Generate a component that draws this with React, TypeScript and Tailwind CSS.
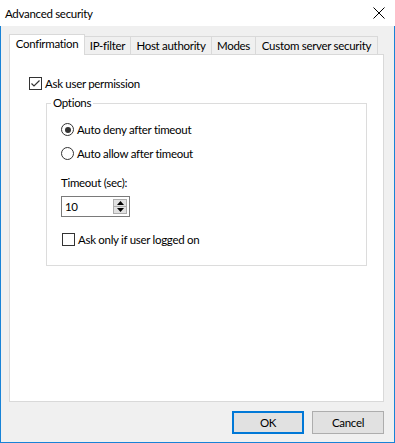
import React from "react";

const font = { fontFamily: "Lato, 'Liberation Sans', sans-serif" };

function CheckBox({ checked }: { checked?: boolean }) {
  return (
    <div className="w-[13px] h-[13px] border border-[#333333] bg-white flex items-center justify-center shrink-0">
      {checked && (
        <svg width="11" height="11" viewBox="0 0 11 11">
          <path d="M1.5 5.5 L4 8 L9.5 2.5" fill="none" stroke="#333333" strokeWidth="1.2" />
        </svg>
      )}
    </div>
  );
}

function Radio({ checked }: { checked?: boolean }) {
  return (
    <div className="w-[13px] h-[13px] rounded-full border border-[#333333] bg-white flex items-center justify-center shrink-0">
      {checked && <div className="w-[6px] h-[6px] rounded-full bg-[#333333]" />}
    </div>
  );
}

export default function App() {
  const tabs = [
    { label: "IP-filter", w: "w-[46px]" },
    { label: "Host authority", w: "w-[81px]" },
    { label: "Modes", w: "w-[44px]" },
    { label: "Custom server security", w: "w-[122px]" },
  ];
  return (
    <div className="w-[395px] h-[443px] flex flex-col bg-white text-[11.5px] tracking-[-0.3px] text-black" style={font}>
      {/* Title bar */}
      <div className="h-[26px] flex items-center justify-between bg-white shrink-0">
        <span className="pl-[5px] pt-[1px]">Advanced security</span>
        <div className="pr-[10px] flex items-center">
          <svg width="12" height="12" viewBox="0 0 12 12">
            <path d="M0.5 0.5 L11.5 11.5 M11.5 0.5 L0.5 11.5" stroke="#000" strokeWidth="1" />
          </svg>
        </div>
      </div>
      {/* Client */}
      <div className="flex-1 flex flex-col bg-[#f0f0f0] border-l border-r border-b border-[#1883d7] pt-[8px] pl-[8px] pr-[9px] pb-[8px]">
        {/* Tabs */}
        <div className="h-[21px] flex items-end relative z-10">
          <div className="w-[76px] h-[21px] bg-white border-l border-t border-r border-[#d9d9d9] flex items-center justify-center pb-[2px]">
            Confirmation
          </div>
          {tabs.map((t) => (
            <div
              key={t.label}
              className={`${t.w} h-[18px] mb-[1px] bg-[#f0f0f0] border-t border-r border-[#d9d9d9] flex items-center justify-center`}
            >
              {t.label}
            </div>
          ))}
        </div>
        {/* Panel */}
        <div className="w-[375px] h-[348px] -mt-px bg-white border border-[#d9d9d9] pt-[22px] pl-[19px]">
          <div className="h-[13px] flex items-center gap-[3px]">
            <CheckBox checked />
            <span>Ask user permission</span>
          </div>
          <div className="relative ml-[17px] mt-[13px] w-[321px] h-[163px] border border-[#dcdcdc] pt-[19px] pl-[14px]">
            <span className="absolute -top-[8px] left-[4px] px-[2px] bg-white leading-[14px]">Options</span>
            <div className="h-[13px] flex items-center gap-[3px]">
              <Radio checked />
              <span>Auto deny after timeout</span>
            </div>
            <div className="h-[13px] mt-[11px] flex items-center gap-[3px]">
              <Radio />
              <span>Auto allow after timeout</span>
            </div>
            <div className="h-[13px] mt-[16px] flex items-center">
              <span>Timeout (sec):</span>
            </div>
            <div className="mt-[7px] w-[69px] h-[21px] border border-[#7a7a7a] bg-white flex items-center">
              <span className="flex-1 pl-[3px]">10</span>
              <div className="flex flex-col mr-[2px]">
                <div className="w-[14px] h-[8px] border border-[#adadad] bg-[#e1e1e1] flex items-center justify-center">
                  <svg width="7" height="4" viewBox="0 0 7 4">
                    <path d="M3.5 0 L7 4 L0 4 Z" fill="#000" />
                  </svg>
                </div>
                <div className="w-[14px] h-[8px] -mt-px border border-[#adadad] bg-[#e1e1e1] flex items-center justify-center">
                  <svg width="7" height="4" viewBox="0 0 7 4">
                    <path d="M0 0 L7 0 L3.5 4 Z" fill="#000" />
                  </svg>
                </div>
              </div>
            </div>
            <div className="h-[13px] mt-[16px] ml-px flex items-center gap-[3px]">
              <CheckBox />
              <span>Ask only if user logged on</span>
            </div>
          </div>
        </div>
        {/* Buttons */}
        <div className="mt-[9px] flex justify-end gap-[8px] pr-[1px]">
          <div className="w-[72px] h-[23px] border-2 border-[#0078d7] bg-[#e1e1e1] flex items-center justify-center">OK</div>
          <div className="w-[72px] h-[23px] border border-[#adadad] bg-[#e1e1e1] flex items-center justify-center">Cancel</div>
        </div>
      </div>
    </div>
  );
}
